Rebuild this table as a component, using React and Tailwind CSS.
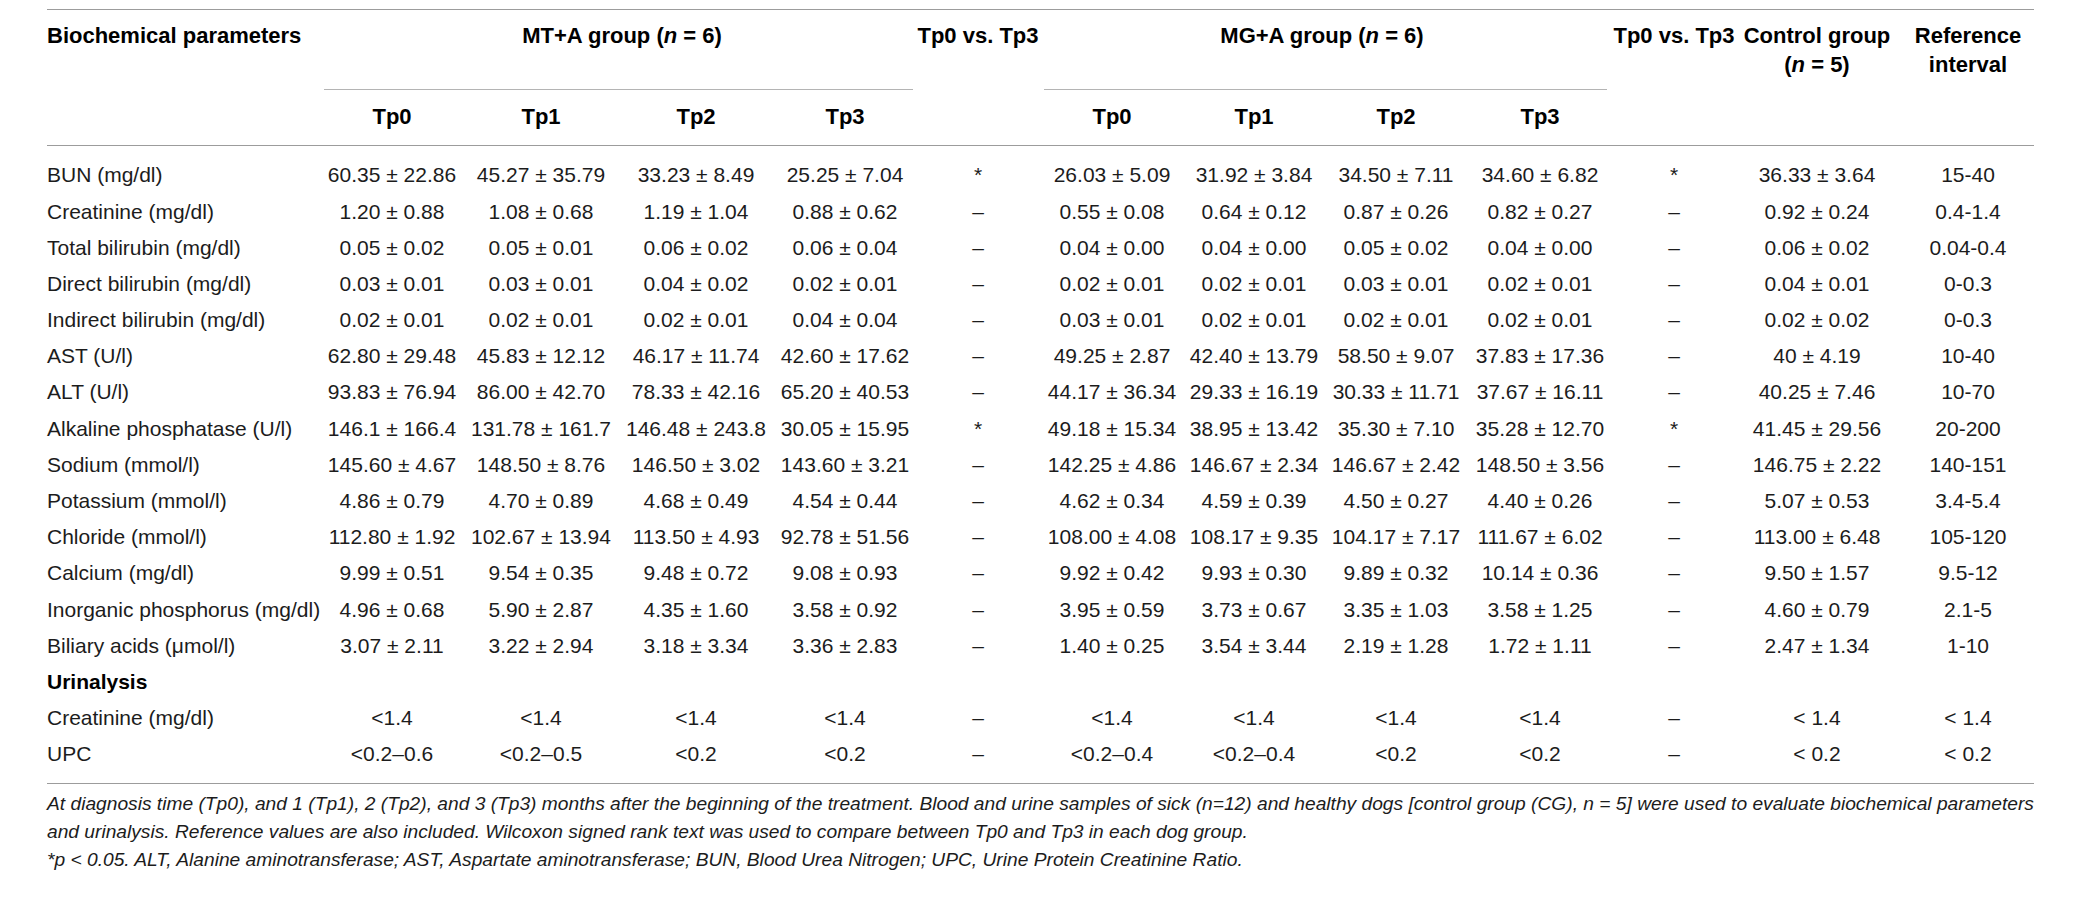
import React from "react";

const COLS =
  "grid grid-cols-[277px_136px_162px_148px_150px_116px_152px_132px_152px_136px_132px_154px_140px]";

const ROWS = [
  ["BUN (mg/dl)", "60.35 ± 22.86", "45.27 ± 35.79", "33.23 ± 8.49", "25.25 ± 7.04", "*", "26.03 ± 5.09", "31.92 ± 3.84", "34.50 ± 7.11", "34.60 ± 6.82", "*", "36.33 ± 3.64", "15-40"],
  ["Creatinine (mg/dl)", "1.20 ± 0.88", "1.08 ± 0.68", "1.19 ± 1.04", "0.88 ± 0.62", "–", "0.55 ± 0.08", "0.64 ± 0.12", "0.87 ± 0.26", "0.82 ± 0.27", "–", "0.92 ± 0.24", "0.4-1.4"],
  ["Total bilirubin (mg/dl)", "0.05 ± 0.02", "0.05 ± 0.01", "0.06 ± 0.02", "0.06 ± 0.04", "–", "0.04 ± 0.00", "0.04 ± 0.00", "0.05 ± 0.02", "0.04 ± 0.00", "–", "0.06 ± 0.02", "0.04-0.4"],
  ["Direct bilirubin (mg/dl)", "0.03 ± 0.01", "0.03 ± 0.01", "0.04 ± 0.02", "0.02 ± 0.01", "–", "0.02 ± 0.01", "0.02 ± 0.01", "0.03 ± 0.01", "0.02 ± 0.01", "–", "0.04 ± 0.01", "0-0.3"],
  ["Indirect bilirubin (mg/dl)", "0.02 ± 0.01", "0.02 ± 0.01", "0.02 ± 0.01", "0.04 ± 0.04", "–", "0.03 ± 0.01", "0.02 ± 0.01", "0.02 ± 0.01", "0.02 ± 0.01", "–", "0.02 ± 0.02", "0-0.3"],
  ["AST (U/l)", "62.80 ± 29.48", "45.83 ± 12.12", "46.17 ± 11.74", "42.60 ± 17.62", "–", "49.25 ± 2.87", "42.40 ± 13.79", "58.50 ± 9.07", "37.83 ± 17.36", "–", "40 ± 4.19", "10-40"],
  ["ALT (U/l)", "93.83 ± 76.94", "86.00 ± 42.70", "78.33 ± 42.16", "65.20 ± 40.53", "–", "44.17 ± 36.34", "29.33 ± 16.19", "30.33 ± 11.71", "37.67 ± 16.11", "–", "40.25 ± 7.46", "10-70"],
  ["Alkaline phosphatase (U/l)", "146.1 ± 166.4", "131.78 ± 161.7", "146.48 ± 243.8", "30.05 ± 15.95", "*", "49.18 ± 15.34", "38.95 ± 13.42", "35.30 ± 7.10", "35.28 ± 12.70", "*", "41.45 ± 29.56", "20-200"],
  ["Sodium (mmol/l)", "145.60 ± 4.67", "148.50 ± 8.76", "146.50 ± 3.02", "143.60 ± 3.21", "–", "142.25 ± 4.86", "146.67 ± 2.34", "146.67 ± 2.42", "148.50 ± 3.56", "–", "146.75 ± 2.22", "140-151"],
  ["Potassium (mmol/l)", "4.86 ± 0.79", "4.70 ± 0.89", "4.68 ± 0.49", "4.54 ± 0.44", "–", "4.62 ± 0.34", "4.59 ± 0.39", "4.50 ± 0.27", "4.40 ± 0.26", "–", "5.07 ± 0.53", "3.4-5.4"],
  ["Chloride (mmol/l)", "112.80 ± 1.92", "102.67 ± 13.94", "113.50 ± 4.93", "92.78 ± 51.56", "–", "108.00 ± 4.08", "108.17 ± 9.35", "104.17 ± 7.17", "111.67 ± 6.02", "–", "113.00 ± 6.48", "105-120"],
  ["Calcium (mg/dl)", "9.99 ± 0.51", "9.54 ± 0.35", "9.48 ± 0.72", "9.08 ± 0.93", "–", "9.92 ± 0.42", "9.93 ± 0.30", "9.89 ± 0.32", "10.14 ± 0.36", "–", "9.50 ± 1.57", "9.5-12"],
  ["Inorganic phosphorus (mg/dl)", "4.96 ± 0.68", "5.90 ± 2.87", "4.35 ± 1.60", "3.58 ± 0.92", "–", "3.95 ± 0.59", "3.73 ± 0.67", "3.35 ± 1.03", "3.58 ± 1.25", "–", "4.60 ± 0.79", "2.1-5"],
  ["Biliary acids (μmol/l)", "3.07 ± 2.11", "3.22 ± 2.94", "3.18 ± 3.34", "3.36 ± 2.83", "–", "1.40 ± 0.25", "3.54 ± 3.44", "2.19 ± 1.28", "1.72 ± 1.11", "–", "2.47 ± 1.34", "1-10"],
];

const URINE = [
  ["Creatinine (mg/dl)", "<1.4", "<1.4", "<1.4", "<1.4", "–", "<1.4", "<1.4", "<1.4", "<1.4", "–", "< 1.4", "< 1.4"],
  ["UPC", "<0.2–0.6", "<0.2–0.5", "<0.2", "<0.2", "–", "<0.2–0.4", "<0.2–0.4", "<0.2", "<0.2", "–", "< 0.2", "< 0.2"],
];

function Row({ cells }) {
  return (
    <div className={`${COLS} h-[36.2px] items-center`}>
      {cells.map((c, i) =>
        i === 0 ? (
          <div key={i} className="whitespace-nowrap">{c}</div>
        ) : (
          <div key={i} className={`flex justify-center whitespace-nowrap ${i === 12 ? "pl-[8px]" : ""}`}>
            {c}
          </div>
        )
      )}
    </div>
  );
}

function Tp({ children }) {
  return <div className="flex justify-center items-center font-bold">{children}</div>;
}

export default function App() {
  return (
    <div className="min-h-screen bg-white pt-[9px] px-[47px] text-[#1c1c1c] font-['Liberation_Sans',Arial,sans-serif]">
      <div className="w-[1987px]">
        {/* header */}
        <div className={`${COLS} grid-rows-[80px_55px] border-t border-b border-[#9c9c9c] text-[22px] leading-[28.5px] font-bold text-black`}>
          <div className="row-span-2 pt-[12px] whitespace-nowrap">Biochemical parameters</div>
          <div className="col-span-4 flex flex-col justify-between pt-[12px]">
            <div className="flex justify-center whitespace-nowrap">
              MT+A group (<i>n</i>&nbsp;=&nbsp;6)
            </div>
            <div className="h-px bg-[#b4b4b4] mr-[7px]" />
          </div>
          <div className="row-span-2 pt-[12px] flex justify-center whitespace-nowrap">Tp0 vs. Tp3</div>
          <div className="col-span-4 flex flex-col justify-between pt-[12px]">
            <div className="flex justify-center whitespace-nowrap">
              MG+A group (<i>n</i>&nbsp;=&nbsp;6)
            </div>
            <div className="h-px bg-[#b4b4b4] ml-[8px] mr-px" />
          </div>
          <div className="row-span-2 pt-[12px] flex justify-center whitespace-nowrap">Tp0 vs. Tp3</div>
          <div className="row-span-2 pt-[12px] flex flex-col items-center whitespace-nowrap">
            <span>Control group</span>
            <span>
              (<i>n</i>&nbsp;=&nbsp;5)
            </span>
          </div>
          <div className="row-span-2 pt-[12px] pl-[8px] text-center">
            Reference
            <br />
            interval
          </div>
          <Tp>Tp0</Tp>
          <Tp>Tp1</Tp>
          <Tp>Tp2</Tp>
          <Tp>Tp3</Tp>
          <Tp>Tp0</Tp>
          <Tp>Tp1</Tp>
          <Tp>Tp2</Tp>
          <Tp>Tp3</Tp>
        </div>

        {/* body */}
        <div className="pt-[11px] pb-[11px] border-b border-[#9c9c9c] text-[21px]">
          {ROWS.map((r) => (
            <Row key={r[0]} cells={r} />
          ))}
          <div className="h-[36.2px] flex items-center font-bold text-black">Urinalysis</div>
          {URINE.map((r) => (
            <Row key={r[0] + r[1]} cells={r} />
          ))}
        </div>

        {/* footnote */}
        <div className="pt-[6px] italic text-[19.2px] leading-[28px] text-[#1c1c1c]">
          <p className="whitespace-nowrap">
            At diagnosis time (Tp0), and 1 (Tp1), 2 (Tp2), and 3 (Tp3) months after the beginning of the treatment. Blood and urine samples of sick (n=12) and healthy dogs [control group (CG), n = 5] were used to evaluate biochemical parameters
          </p>
          <p className="whitespace-nowrap">
            and urinalysis. Reference values are also included. Wilcoxon signed rank text was used to compare between Tp0 and Tp3 in each dog group.
          </p>
          <p className="whitespace-nowrap">
            *p &lt; 0.05. ALT, Alanine aminotransferase; AST, Aspartate aminotransferase; BUN, Blood Urea Nitrogen; UPC, Urine Protein Creatinine Ratio.
          </p>
        </div>
      </div>
    </div>
  );
}
